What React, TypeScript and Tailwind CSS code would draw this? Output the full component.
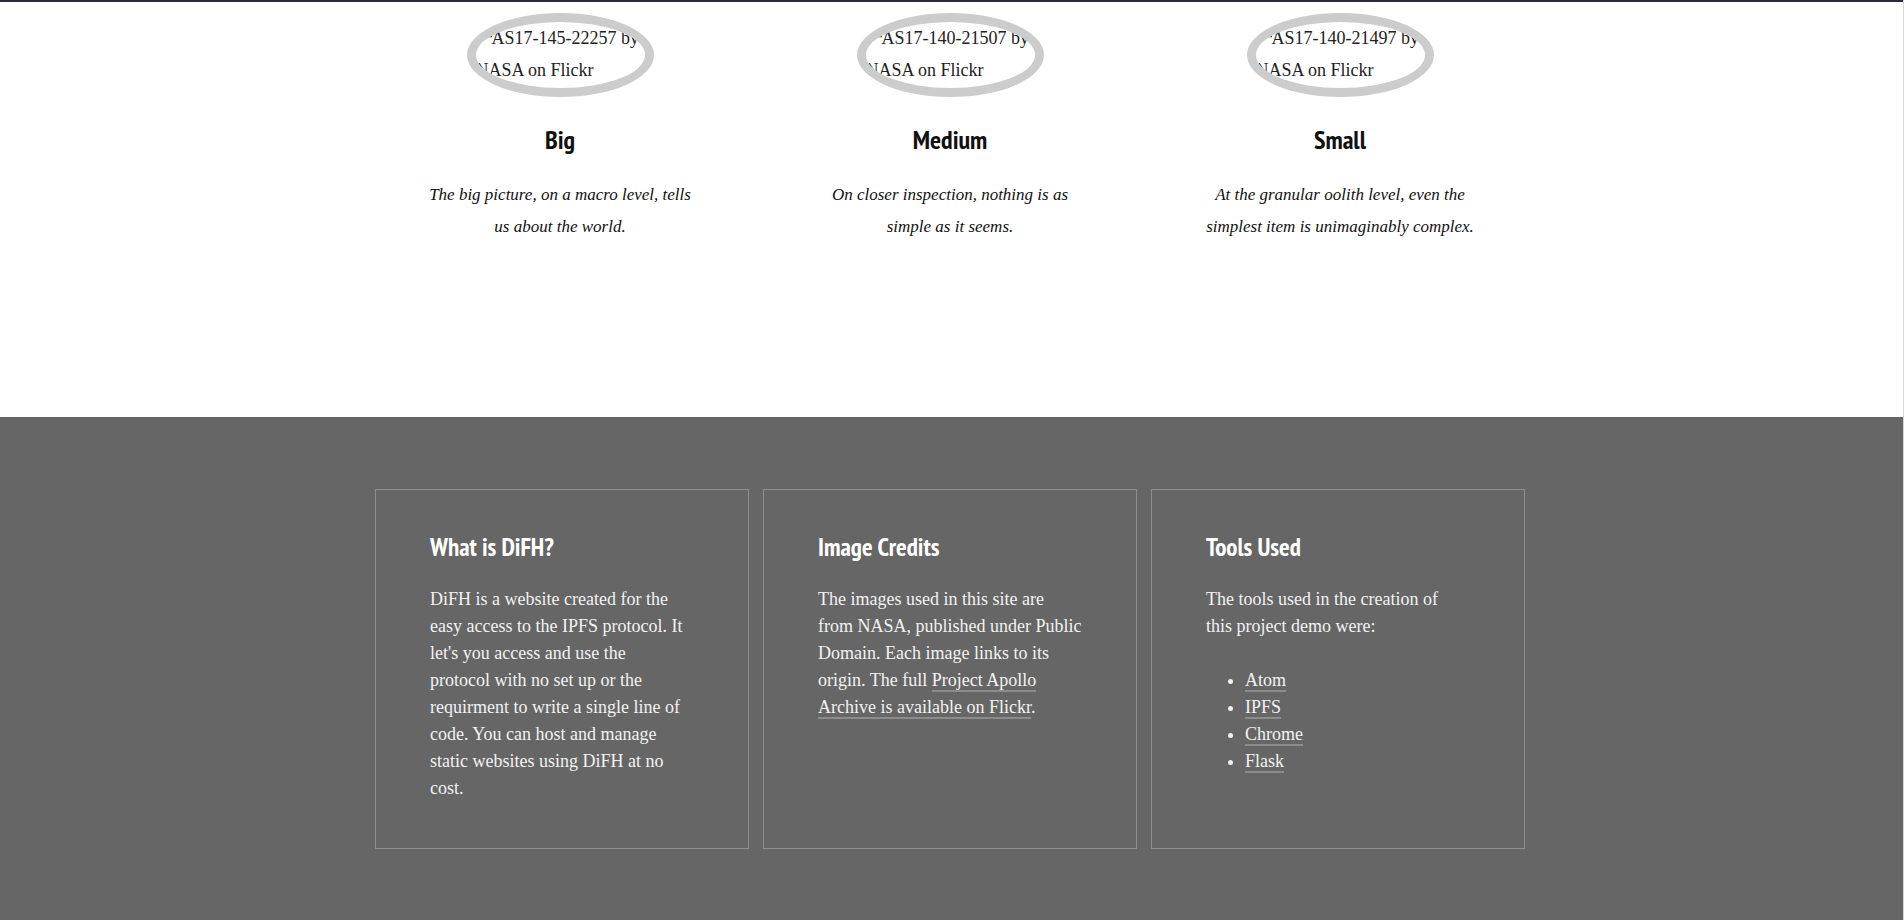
import { ReactNode } from "react"

// columnas de la parte de arriba
const scales = [
    { id: "AS17-145-22257", title: "Big", lines: ["The big picture, on a macro level, tells", "us about the world."] },
    { id: "AS17-140-21507", title: "Medium", lines: ["On closer inspection, nothing is as", "simple as it seems."] },
    { id: "AS17-140-21497", title: "Small", lines: ["At the granular oolith level, even the", "simplest item is unimaginably complex."] },
]

const tools = ["Atom", "IPFS", "Chrome", "Flask"]

const serif = "font-['Liberation_Serif','DejaVu_Serif',serif]"
const narrow = "font-['PT_Sans_Narrow','Liberation_Sans_Narrow','DejaVu_Sans_Condensed','Roboto_Condensed',sans-serif] font-stretch-condensed"

// imagen rota: se ve solo el texto alt dentro del borde redondo
const BrokenImage = ({ alt }: { alt: string }) => {
    return (
        <div className={`w-[187px] h-[84px] rounded-[50%] border-[9px] border-[#cccccc] overflow-hidden ${serif} text-[18px] leading-[32px] text-[#222]`}>
            <svg width="16" height="16" viewBox="0 0 16 16" className="inline-block align-baseline" fill="none" stroke="#333" strokeWidth="1.3">
                <path d="M11 8.5h5" />
            </svg>
            {alt} by NASA on Flickr
        </div>
    )
}

const FooterLink = ({ children }: { children: ReactNode }) => {
    return <a href="#" className="border-b-2 border-[#8c8c8c]">{children}</a>
}

const Card = ({ title, children }: { title: string; children: ReactNode }) => {
    return (
        <div className="h-[360px] border border-[#8f8f8f] pt-[42px] pl-[54px] pr-[40px]">
            <h2 className={`${narrow} font-bold text-[25px] leading-[30px] text-white`}>{title}</h2>
            <div className={`mt-[24px] ${serif} text-[18px] leading-[27px] text-[#f2f2f2]`}>
                {children}
            </div>
        </div>
    )
}

export default function App() {
    return (
        <div className="w-full border-r border-[#d6d6d6] bg-white">

            {/* parte blanca */}
            <section className="h-[417px] border-t-2 border-[#2a2a38] pt-[11px]">
                <div className="grid grid-cols-3 w-[1170px] ml-[365px]">
                    {scales.map((s) => (
                        <div key={s.id} className="flex flex-col items-center">
                            <BrokenImage alt={s.id} />
                            <h3 className={`mt-[27px] ${narrow} font-bold text-[26px] leading-[32px] text-[#111]`}>{s.title}</h3>
                            <p className={`mt-[23px] ${serif} italic text-[17px] leading-[32px] text-[#111] text-center whitespace-nowrap`}>
                                {s.lines[0]}<br />{s.lines[1]}
                            </p>
                        </div>
                    ))}
                </div>
            </section>

            {/* footer gris */}
            <footer className="bg-[#666666] pt-[72px] pb-[72px]">
                <div className="grid grid-cols-3 gap-[14px] w-[1150px] ml-[375px]">

                    <Card title="What is DiFH?">
                        <p className="whitespace-nowrap">
                            DiFH is a website created for the<br />
                            easy access to the IPFS protocol. It<br />
                            let's you access and use the<br />
                            protocol with no set up or the<br />
                            requirment to write a single line of<br />
                            code. You can host and manage<br />
                            static websites using DiFH at no<br />
                            cost.
                        </p>
                    </Card>

                    <Card title="Image Credits">
                        <p className="whitespace-nowrap">
                            The images used in this site are<br />
                            from NASA, published under Public<br />
                            Domain. Each image links to its<br />
                            origin. The full <FooterLink>Project Apollo<br />Archive is available on Flickr</FooterLink>.
                        </p>
                    </Card>

                    <Card title="Tools Used">
                        <p className="whitespace-nowrap">
                            The tools used in the creation of<br />
                            this project demo were:
                        </p>
                        <ul className="mt-[27px] pl-[39px] list-disc">
                            {tools.map((t) => (
                                <li key={t}><FooterLink>{t}</FooterLink></li>
                            ))}
                        </ul>
                    </Card>

                </div>
            </footer>

        </div>
    )
}
